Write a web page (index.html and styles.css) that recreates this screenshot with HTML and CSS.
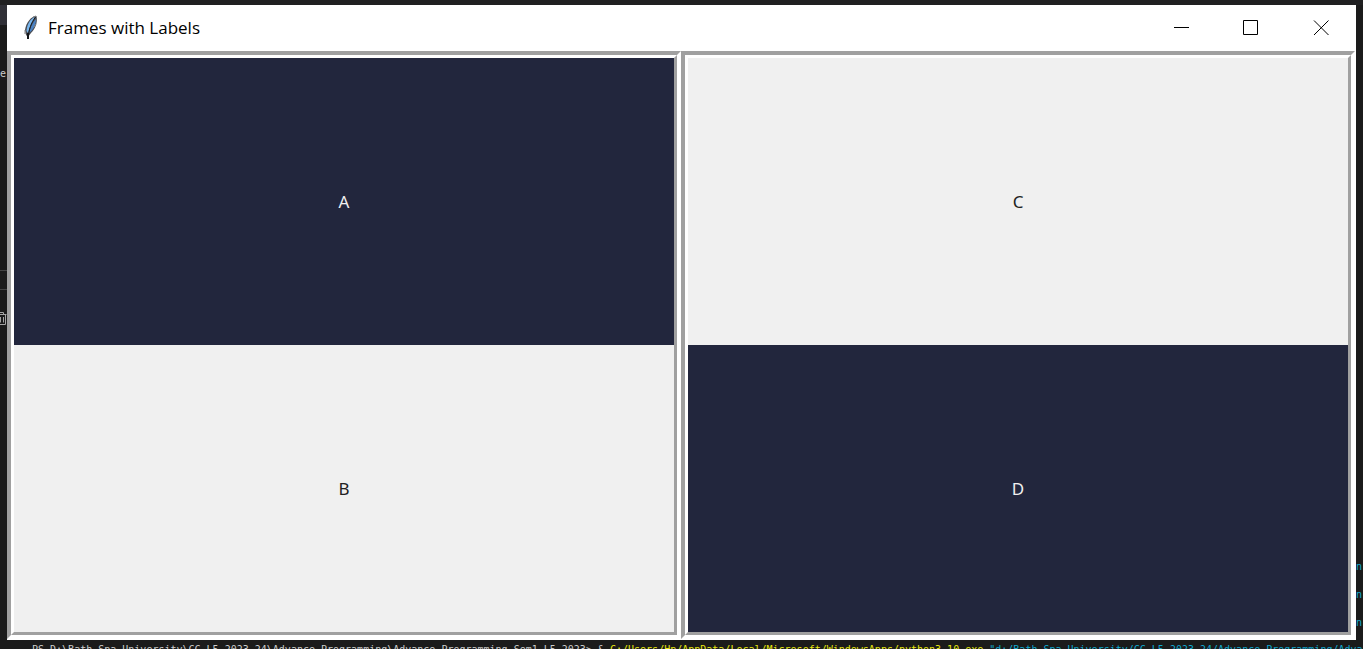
FILE: index.html
```html
<!DOCTYPE html>
<html lang="en">
<head>
<meta charset="utf-8">
<title>Frames with Labels</title>
<link rel="stylesheet" href="styles.css">
</head>
<body>
<div class="desktop">
  <div class="top-edge"></div>
  <div class="left-edge">
    <span class="tab-edge"></span>
    <span class="left-char">e</span>
    <div class="rows"><span></span><span></span></div>
    <svg class="trash" width="7" height="13" viewBox="0 0 7 13" fill="none" stroke="#a5a5a5"><path d="M0 2.500H6.500M0 .5H3.500V2M5.500 3V12.500H0M.5 5V10.500M3.500 5V10.500"/></svg>
  </div>
  <main class="window">
    <header class="titlebar">
      <svg class="feather" width="16" height="26" viewBox="0 0 16 26">
        <path d="M13.500 1C8 1 3 8 2 15L3 20L5 22L8 18C12 14 15 8 13.500 1Z" fill="#4a4d54"/>
        <path d="M12 2C8 3 4 9 3.500 16L5 18C6 13 9 7 12 2Z" fill="#79b7ef"/>
        <path d="M13 4C10 7 7 13 6 18C10 15 13 10 13 4Z" fill="#4a82c4"/>
        <path d="M12.500 2C8 8 6 14 5 24" fill="none" stroke="#141619" stroke-width="1"/>
        <path d="M5 18V24" stroke="#141619" stroke-width="2"/>
        <path d="M10 2L13 1M2 15V19M11 12L13 9" stroke="#858585" stroke-width="1"/>
      </svg>
      <h1 class="title">Frames with Labels</h1>
      <div class="controls">
        <button class="control" aria-label="Minimize"><svg width="16" height="16" viewBox="0 0 16 16"><path d="M1 7.500H16" stroke="#000"/></svg></button>
        <button class="control" aria-label="Maximize"><svg width="16" height="16" viewBox="0 0 16 16"><path d="M.5 .5H14.500V14.500H.5Z" fill="none" stroke="#000"/></svg></button>
        <button class="control" aria-label="Close"><svg width="16" height="16" viewBox="0 0 16 16"><path d="M1 .5L15.500 15M15.500 .5L1 15" stroke="#000"/></svg></button>
      </div>
    </header>
    <div class="frames">
      <section class="frame"><div class="frame-inner">
        <div class="cell dark">A</div>
        <div class="cell">B</div>
      </div></section>
      <section class="frame"><div class="frame-inner">
        <div class="cell">C</div>
        <div class="cell dark">D</div>
      </div></section>
    </div>
  </main>
  <div class="right-edge">
    <span class="rule"></span>
    <span class="right-char">n</span>
    <span class="right-char">n</span>
    <span class="right-char">n</span>
  </div>
  <div class="terminal"><span>PS D:\Bath Spa University\CC L5 2023 24\Advance Programming\Advance Programming Sem1 L5 2023&gt; &amp; </span><span class="command">C:/Users/Hp/AppData/Local/Microsoft/WindowsApps/python3.10.exe </span><span class="path">"d:/Bath Spa University/CC L5 2023 24/Advance Programming/Advance</span></div>
</div>
</body>
</html>
```
FILE: styles.css
```css
* { box-sizing: border-box; }

body {
  margin: 0;
  background: #1b1b1b;
  overflow: hidden;
}

.desktop {
  display: grid;
  grid-template-columns: 7px minmax(0, 1fr) 7px;
  grid-template-rows: 5px minmax(0, 1fr) 9px;
  height: 100vh;
  font: 10px/14px "DejaVu Sans Mono", monospace;
  color: #ccc;
}

.top-edge {
  grid-column: 1 / -1;
  background: #202021;
}

.left-edge,
.right-edge {
  display: flex;
  flex-direction: column;
  overflow: hidden;
}

.tab-edge {
  height: 20px;
  background: #303037;
}

.left-char {
  margin-top: 42px;
  line-height: 14px;
}

.rows {
  display: flex;
  flex-direction: column;
  gap: 18px;
  margin-top: 189px;
}

.rows span,
.rule {
  height: 1px;
  background: #444;
}

.trash { margin-top: 22px; }

.rule { margin-top: 520px; }

.right-char {
  margin-bottom: 14px;
  color: #11a8cd;
}

.rule + .right-char { margin-top: 35px; }

.window {
  display: flex;
  flex-direction: column;
  background: #fff;
}

.titlebar {
  display: flex;
  align-items: center;
  height: 46px;
  padding-left: 16px;
}

.title {
  flex: 1;
  margin: 0 0 0 9px;
  font: 400 17px/24px "Open Sans", "Noto Sans", sans-serif;
  color: #000;
}

.controls {
  display: flex;
  align-self: stretch;
}

.control {
  display: flex;
  align-items: center;
  justify-content: center;
  width: 70px;
  padding: 0;
  border: 0;
  background: #fff;
}

.frames {
  flex: 1;
  display: grid;
  grid-template-columns: 1fr 1fr;
  min-height: 0;
  padding: 0 1px 1px 0;
}

.frame {
  display: grid;
  border: 4px solid;
  border-color: #a0a0a0 #fff #fff #a0a0a0;
}

.frame-inner {
  display: grid;
  grid-template-rows: 1fr 1fr;
  border: 3px solid;
  border-color: #fff #a0a0a0 #a0a0a0 #fff;
}

.cell {
  display: flex;
  align-items: center;
  justify-content: center;
  background: #f0f0f0;
  color: #222;
  font: 17px/24px "Noto Sans", sans-serif;
}

.dark {
  background: #22263d;
  color: #f0f0f0;
}

.terminal {
  grid-column: 1 / -1;
  padding: 3px 0 0 32px;
  overflow: hidden;
  white-space: pre;
}

.command { color: #e5e510; }

.path { color: #11a8cd; }
```
